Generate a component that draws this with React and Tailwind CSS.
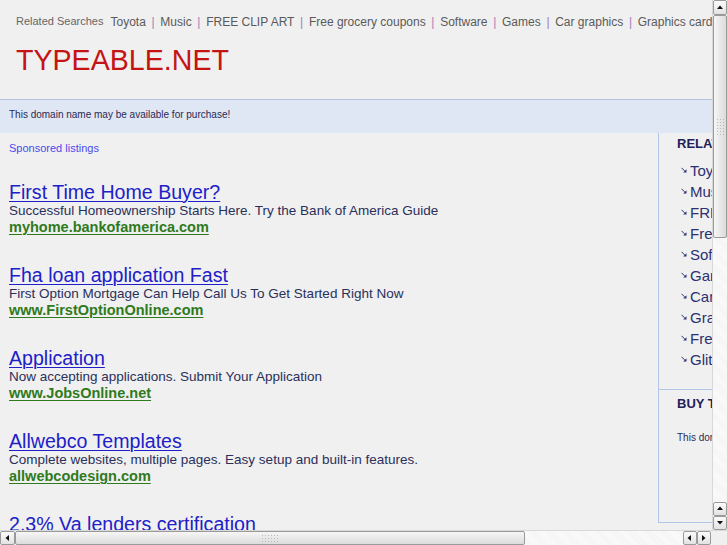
import React from "react"

const related = ["Toyota", "Music", "FREE CLIP ART", "Free grocery coupons", "Software", "Games", "Car graphics", "Graphics card"]

const sideLinks = ["Toyota", "Music", "FREE CLIP ART", "Free grocery coupons", "Software", "Games", "Car graphics", "Graphics card", "Free fonts", "Glitter graphics"]

const ads = [
  { title: "First Time Home Buyer?", desc: "Successful Homeownership Starts Here. Try the Bank of America Guide", url: "myhome.bankofamerica.com" },
  { title: "Fha loan application Fast", desc: "First Option Mortgage Can Help Call Us To Get Started Right Now", url: "www.FirstOptionOnline.com" },
  { title: "Application", desc: "Now accepting applications. Submit Your Application", url: "www.JobsOnline.net" },
  { title: "Allwebco Templates", desc: "Complete websites, multiple pages. Easy setup and built-in features.", url: "allwebcodesign.com" },
  { title: "2.3% Va lenders certification", desc: "Find VA lenders certified in your area today", url: "www.VALoanCenter.com" },
]

const Arrow = () => (
  <svg width="6" height="6" viewBox="0 0 6 6" className="shrink-0 -mt-[3px]">
    <path d="M0.5 0.8 L3.6 3.9" stroke="#2a3070" strokeWidth="1" />
    <path d="M5.5 2.2 L5.5 5.5 L2.2 5.5 Z" fill="#2a3070" />
  </svg>
)

const Tri = ({ dir }) => {
  const d = {
    up: "M1 5 L4 1.5 L7 5 Z",
    down: "M1 2 L4 5.5 L7 2 Z",
    left: "M5 1 L1.5 4 L5 7 Z",
    right: "M2 1 L5.5 4 L2 7 Z",
  }[dir]
  return (
    <svg width="8" height="8" viewBox="0 0 8 8">
      <path d={d} fill="#111" />
    </svg>
  )
}

const ScrollBtn = ({ dir, className = "" }) => (
  <div className={`flex items-center justify-center bg-gradient-to-b from-[#fbfbfb] to-[#e2e2e2] border border-[#9a9a9a] rounded-[2px] ${className}`}>
    <Tri dir={dir} />
  </div>
)

const Grip = ({ vertical }) => (
  <div className={`grid ${vertical ? "grid-cols-3 gap-[2px]" : "grid-cols-6 gap-[2px]"}`}>
    {Array.from({ length: 18 }).map((_, i) => (
      <div key={i} className="w-[1px] h-[1px] bg-[#b8b8b8]" />
    ))}
  </div>
)

export default function App() {
  return (
    <div className="w-[727px] h-[545px] flex flex-col overflow-hidden bg-[#f0f0f0] font-['Liberation_Sans',Arial,sans-serif]">
      <div className="flex flex-1 min-h-0">
        {/* page viewport */}
        <div className="w-[712px] overflow-hidden">
          <div className="w-[880px]">
            {/* header */}
            <div className="h-[100px] border-b border-[#b7c6de] pl-[16px]">
              <div className="flex items-center pt-[14px] h-[29px] whitespace-nowrap">
                <span className="text-[11px] text-[#666] mr-[7px]">Related Searches</span>
                {related.map((r, i) => (
                  <React.Fragment key={r}>
                    {i > 0 && <span className="text-[12px] text-[#a080b8] mx-[5.7px]">|</span>}
                    <span className="text-[12px] text-[#5a5a5a]">{r}</span>
                  </React.Fragment>
                ))}
              </div>
              <div className="mt-[15px] text-[28.6px] leading-[32px] text-[#c41414]">TYPEABLE.NET</div>
            </div>

            {/* purchase band */}
            <div className="h-[33px] bg-[#dfe6f4] pl-[9px] pb-[4px] flex items-center">
              <span className="text-[10px] text-[#2a2a55]">This domain name may be available for purchase!</span>
            </div>

            <div className="flex">
              {/* listings */}
              <div className="w-[658px] pl-[9px] pt-[9px]">
                <div className="text-[11px] leading-[13px] text-[#4a4aee]">Sponsored listings</div>
                <div className="pt-[27px]">
                  {ads.map((a) => (
                    <div key={a.title} className="pb-[29px]">
                      <div className="text-[19.6px] leading-[20px] text-[#2020c8] underline underline-offset-[2px] decoration-1 whitespace-nowrap">{a.title}</div>
                      <div className="text-[13.5px] leading-[17px] text-[#2a2f5a] whitespace-nowrap">{a.desc}</div>
                      <div className="text-[14.5px] leading-[17px] font-bold text-[#2f7a1c] underline underline-offset-[2px] decoration-1 whitespace-nowrap">{a.url}</div>
                    </div>
                  ))}
                </div>
              </div>

              {/* sidebar */}
              <div className="w-[220px] h-[390px] border-l border-b border-[#b2c6ea] flex flex-col">
                <div className="pl-[18px] pt-[3px] h-[256px]">
                  <div className="text-[13px] leading-[15px] font-bold text-[#1e2258]">RELATED SEARCHES</div>
                  <div className="mt-[10px] pl-[4px]">
                    {sideLinks.map((s) => (
                      <div key={s} className="flex items-center gap-[3px] h-[21px] whitespace-nowrap">
                        <Arrow />
                        <span className="text-[15px] text-[#2a3070]">{s}</span>
                      </div>
                    ))}
                  </div>
                </div>
                <div className="border-t border-[#b2c6ea] pl-[18px] pt-[6px]">
                  <div className="text-[13px] leading-[15px] font-bold text-[#1e2258]">BUY THIS DOMAIN</div>
                  <div className="mt-[21px] text-[10px] leading-[12px] text-[#2a2a55] whitespace-nowrap">This domain may be for sale.</div>
                </div>
              </div>
            </div>
          </div>
        </div>

        {/* vertical scrollbar */}
        <div className="w-[15px] flex flex-col bg-[#f7f7f7] border-l border-[#d8d8d8]">
          <ScrollBtn dir="up" className="h-[15px]" />
          <div className="h-[223px] flex items-center justify-center bg-gradient-to-r from-[#f6f6f6] to-[#dcdcdc] border border-[#9a9a9a] rounded-[2px]">
            <Grip vertical />
          </div>
          <div className="flex-1 bg-[repeating-linear-gradient(45deg,#f4f4f4_0px,#f4f4f4_1px,#fbfbfb_1px,#fbfbfb_2px)]" />
          <ScrollBtn dir="up" className="h-[14px]" />
          <ScrollBtn dir="down" className="h-[14px]" />
        </div>
      </div>

      {/* horizontal scrollbar */}
      <div className="h-[15px] flex bg-[#f7f7f7] border-t border-[#d8d8d8]">
        <ScrollBtn dir="left" className="w-[15px]" />
        <div className="w-[510px] flex items-center justify-center bg-gradient-to-b from-[#f6f6f6] to-[#dcdcdc] border border-[#9a9a9a] rounded-[2px]">
          <Grip />
        </div>
        <div className="w-[158px] bg-[repeating-linear-gradient(45deg,#f4f4f4_0px,#f4f4f4_1px,#fbfbfb_1px,#fbfbfb_2px)]" />
        <ScrollBtn dir="left" className="w-[14px]" />
        <ScrollBtn dir="right" className="w-[14px]" />
        <div className="flex-1 bg-[#f0f0f0]" />
      </div>
    </div>
  )
}
